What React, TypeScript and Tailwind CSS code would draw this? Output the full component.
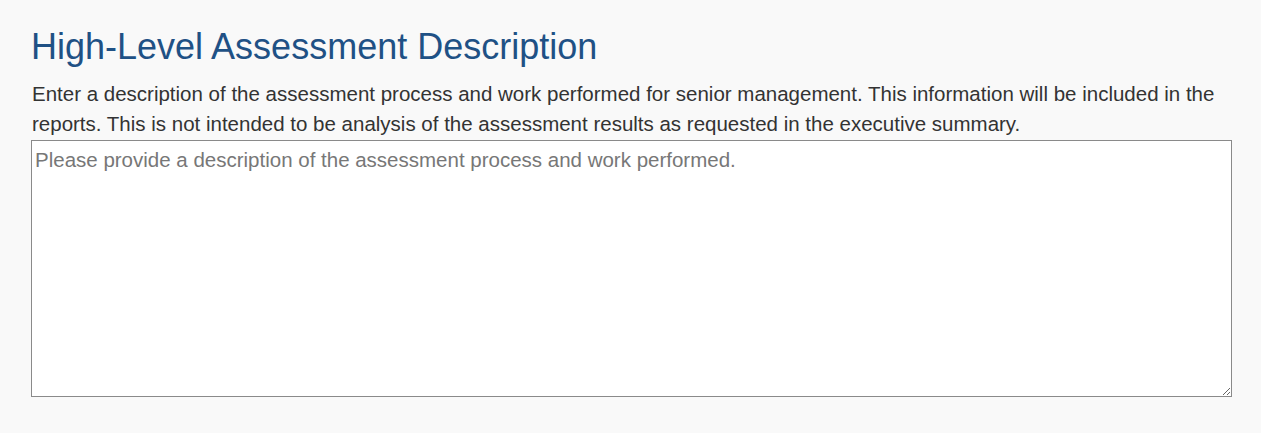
import React from "react";

export default function App() {
  return (
    <div className="min-h-[433px] w-full bg-[#f9f9f9] pt-[24px] pl-[31px] pr-[29px]" style={{ fontFamily: '"Liberation Sans", Arial, sans-serif' }}>
      <h1 className="m-0 text-[36px] leading-[46px] font-normal text-[#1f5185]">High-Level Assessment Description</h1>
      <p className="mt-[9px] mb-0 pl-[1px] text-[20.5px] leading-[30px] text-[#333333]">
        Enter a description of the assessment process and work performed for senior management. This information will be included in the reports. This is not intended to be analysis of the assessment results as requested in the executive summary.
      </p>
      <textarea
        className="mt-[1px] block h-[257px] w-full resize-y border border-[#8a8a8a] bg-white px-[3px] pt-[7px] pb-[6px] text-[20.5px] leading-[24px] text-[#333] placeholder:text-[#777777] outline-none"
        style={{ fontFamily: '"Liberation Sans", Arial, sans-serif' }}
        placeholder="Please provide a description of the assessment process and work performed."
      />
    </div>
  );
}
